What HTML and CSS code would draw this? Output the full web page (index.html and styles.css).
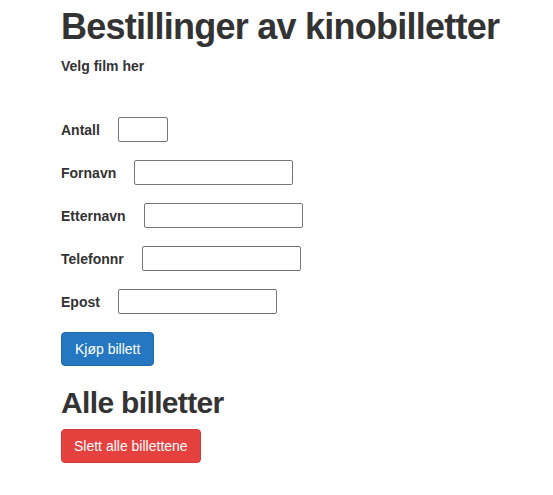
FILE: index.html
```html
<!DOCTYPE html>
<html lang="no">
<head>
<meta charset="utf-8">
<title>Bestillinger av kinobilletter</title>
<link rel="stylesheet" href="styles.css">
</head>
<body>
<div class="container">
  <h1 class="title">Bestillinger av kinobilletter</h1>
  <div class="film-label">Velg film her</div>
  <form class="form">
    <div class="row"><label class="lbl">Antall</label><input class="field small" type="text"></div>
    <div class="row"><label class="lbl">Fornavn</label><input class="field" type="text"></div>
    <div class="row"><label class="lbl">Etternavn</label><input class="field" type="text"></div>
    <div class="row"><label class="lbl">Telefonnr</label><input class="field" type="text"></div>
    <div class="row"><label class="lbl">Epost</label><input class="field" type="text"></div>
  </form>
  <button class="btn btn-primary" type="button">Kjøp billett</button>
  <h2 class="subtitle">Alle billetter</h2>
  <button class="btn btn-danger" type="button">Slett alle billettene</button>
</div>
</body>
</html>
```
FILE: styles.css
```css
html, body {
  margin: 0;
  padding: 0;
  background: #fff;
}
body {
  font-family: "Liberation Sans", Arial, sans-serif;
  font-size: 14px;
  line-height: 1.42857;
  color: #333;
}
.container {
  padding: 0 0 0 61px;
}
.title {
  font-size: 36px;
  font-weight: bold;
  letter-spacing: -0.75px;
  line-height: 1.1;
  margin: 7px 0 0 0;
}
.film-label {
  font-weight: bold;
  margin-top: 10px;
}
.form {
  margin-top: 40px;
  display: flex;
  flex-direction: column;
  gap: 18px;
}
.row {
  display: flex;
  align-items: center;
}
.lbl {
  font-weight: bold;
  margin-right: 18px;
  padding-top: 3px;
}
.field {
  box-sizing: border-box;
  width: 159px;
  height: 25px;
  border: 1px solid #767676;
  border-radius: 2px;
  padding: 1px 2px;
  margin: 0;
}
.field.small {
  width: 50px;
}
.btn {
  display: block;
  font-family: inherit;
  font-size: 14px;
  line-height: 20px;
  padding: 6px 13px;
  border: 1px solid transparent;
  border-radius: 4px;
  color: #fff;
  cursor: pointer;
}
.btn-primary {
  margin-top: 18px;
  background: #2577c2;
  border-color: #1f69ad;
}
.btn-danger {
  padding: 6px 12px;
  background: #e4413f;
  border-color: #d23a38;
}
.subtitle {
  font-size: 30px;
  font-weight: bold;
  letter-spacing: -0.65px;
  line-height: 1.1;
  margin: 20px 0 10px 0;
}
```
